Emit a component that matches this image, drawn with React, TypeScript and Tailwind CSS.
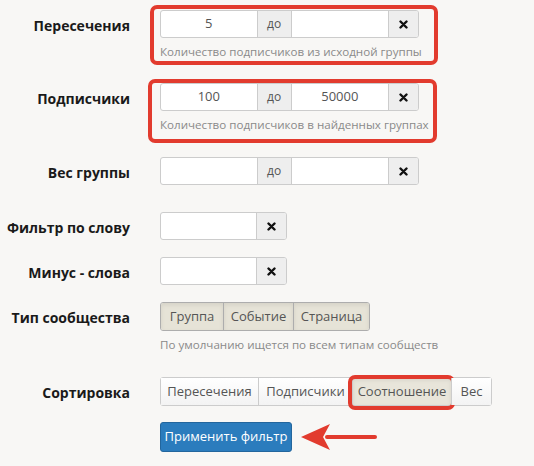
import React from "react";

const font = { fontFamily: '"Open Sans", "Noto Sans", sans-serif' };

const Cross = () => (
  <svg width="9" height="9" viewBox="0 0 9 9">
    <path d="M1.5 1.5 L7.5 7.5 M7.5 1.5 L1.5 7.5" stroke="#111" strokeWidth="2.4" strokeLinecap="round" />
  </svg>
);

const Label = ({ children }: { children: React.ReactNode }) => (
  <div className="w-[130px] shrink-0 h-[28px] pt-[3px] flex items-center justify-end text-[14px] font-bold text-[#1a1a1a] whitespace-nowrap">
    {children}
  </div>
);

const ClearBtn = () => (
  <div className="w-[30px] h-full flex items-center justify-center bg-[#eeeeee] border-l border-[#cccccc]">
    <Cross />
  </div>
);

const RangeGroup = ({ from, to }: { from: string; to: string }) => (
  <div className="flex h-[28px] w-[259px] border border-[#cccccc] rounded-[3px] bg-white overflow-hidden text-[13px] text-[#555]">
    <div className="w-[96px] flex items-center justify-center">{from}</div>
    <div className="w-[35px] flex items-center justify-center bg-[#eeeeee] border-x border-[#cccccc] text-[12px] text-[#555]">
      до
    </div>
    <div className="w-[97px] flex items-center justify-center">{to}</div>
    <ClearBtn />
  </div>
);

const WordGroup = () => (
  <div className="flex h-[28px] w-[127px] border border-[#cccccc] rounded-[3px] bg-white overflow-hidden">
    <div className="w-[96px]" />
    <ClearBtn />
  </div>
);

const Help = ({ children }: { children: React.ReactNode }) => (
  <div className="mt-[6px] text-[11.6px] leading-[16px] text-[#8a8a8a] whitespace-nowrap">{children}</div>
);

const Highlight = ({ className }: { className: string }) => (
  <span className={`absolute border-[4px] border-[#e23b2e] rounded-[7px] pointer-events-none ${className}`} />
);

const App = () => {
  const types = [
    { t: "Группа", w: "w-[62px]" },
    { t: "Событие", w: "w-[70px]" },
    { t: "Страница", w: "w-[76px]" },
  ];
  const sorts = [
    { t: "Пересечения", w: "w-[97px]", active: false },
    { t: "Подписчики", w: "w-[94px]", active: false },
    { t: "Соотношение", w: "w-[99px]", active: true },
    { t: "Вес", w: "w-[40px]", active: false },
  ];

  return (
    <div className="w-[534px] h-[466px] bg-[#f8f7f5] pt-[10px] overflow-hidden" style={font}>
      <div className="flex gap-[30px]">
        <Label>Пересечения</Label>
        <div className="relative">
          <RangeGroup from="5" to="" />
          <Help>Количество подписчиков из исходной группы</Help>
          <Highlight className="-left-[10px] -right-[16px] -top-[5px] -bottom-[5px]" />
        </div>
      </div>

      <div className="flex gap-[30px] mt-[23px]">
        <Label>Подписчики</Label>
        <div className="relative">
          <RangeGroup from="100" to="50000" />
          <Help>Количество подписчиков в найденных группах</Help>
          <Highlight className="-left-[12px] -right-[8px] -top-[4px] -bottom-[10px]" />
        </div>
      </div>

      <div className="flex gap-[30px] mt-[24px]">
        <Label>Вес группы</Label>
        <RangeGroup from="" to="" />
      </div>

      <div className="flex gap-[30px] mt-[27px]">
        <Label>Фильтр по слову</Label>
        <WordGroup />
      </div>

      <div className="flex gap-[30px] mt-[17px]">
        <Label>Минус - слова</Label>
        <WordGroup />
      </div>

      <div className="flex gap-[30px] mt-[17px]">
        <Label>Тип сообщества</Label>
        <div>
          <div className="flex w-fit h-[29px] border border-[#adadad] rounded-[3px] overflow-hidden">
            {types.map((b, i) => (
              <div
                key={b.t}
                className={`${b.w} flex items-center justify-center bg-[#e6e3d7] shadow-[inset_0_2px_4px_rgba(0,0,0,0.08)] text-[13px] text-[#555] ${
                  i > 0 ? "border-l border-[#adadad]" : ""
                }`}
              >
                {b.t}
              </div>
            ))}
          </div>
          <Help>По умолчанию ищется по всем типам сообществ</Help>
        </div>
      </div>

      <div className="flex gap-[30px] mt-[24px]">
        <Label>Сортировка</Label>
        <div className="flex h-[29px] border border-[#cccccc] rounded-[3px]">
          {sorts.map((b, i) => (
            <div
              key={b.t}
              className={`relative ${b.w} flex items-center justify-center text-[13px] text-[#555] ${
                i > 0 ? "border-l border-[#cccccc]" : ""
              } ${b.active ? "bg-[#e8e5da] shadow-[inset_0_2px_4px_rgba(0,0,0,0.08)]" : "bg-gradient-to-b from-white to-[#f3f3f3]"}`}
            >
              {b.t}
              {b.active && <Highlight className="-left-[5px] -right-[4px] -top-[3px] -bottom-[5px]" />}
            </div>
          ))}
        </div>
      </div>

      <div className="flex items-center mt-[16px] ml-[160px]">
        <button className="w-[132px] h-[30px] bg-[#2b7cbd] border border-[#23669d] rounded-[3px] text-white text-[13px]">
          Применить фильтр
        </button>
        <svg width="78" height="30" viewBox="0 0 78 30" className="ml-[8px]">
          <path d="M27 15 L75 15" stroke="#e23b2e" strokeWidth="4" strokeLinecap="round" />
          <path d="M1 15 L30 2 L23 15 L30 28 Z" fill="#e23b2e" />
        </svg>
      </div>
    </div>
  );
};

export default App;
